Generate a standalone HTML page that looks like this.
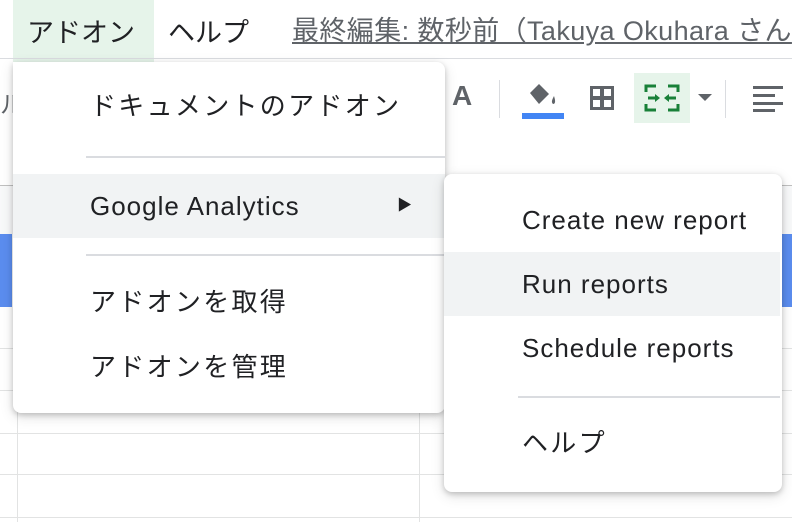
<!DOCTYPE html>
<html><head><meta charset="utf-8"><style>
*{margin:0;padding:0;box-sizing:border-box}
body{width:792px;height:522px;overflow:hidden;background:#fff;position:relative;font-family:"Liberation Sans","Noto Sans CJK JP",sans-serif;color:#202124}
.abs{position:absolute}
.hl{position:absolute;left:0;right:0;height:1px;background:#e2e3e3}
.vl{position:absolute;top:0;bottom:0;width:1px;background:#e2e3e3}
.menu{position:absolute;background:#fff;border-radius:8px;box-shadow:0 2px 6px rgba(0,0,0,.2),0 4px 14px rgba(0,0,0,.12)}
.it{position:absolute;left:0;right:0;font-size:26px;letter-spacing:1px;line-height:64px;height:64px;white-space:nowrap}
.jp{letter-spacing:2.3px}
.sep{position:absolute;height:2px;background:#dadce0}
</style></head><body>
<div class="abs" style="left:13px;top:0;width:141px;height:62px;background:#e6f4ea"></div>
<div class="abs" style="left:27px;top:11px;font-size:27px;color:#202124">アドオン</div>
<div class="abs" style="left:168px;top:11px;font-size:27px;color:#202124">ヘルプ</div>
<div class="abs" style="left:292px;top:9px;font-size:27px;color:#5f6368;text-decoration:underline;white-space:nowrap;letter-spacing:0.4px">最終編集: 数秒前（Takuya Okuhara さん</div>
<div class="hl" style="top:58px;background:#dadce0"></div>
<div class="abs" style="left:0;top:85px;font-size:24px;color:#5f6368">ル</div>
<div class="abs" style="left:452px;top:80px;font-size:28px;font-weight:bold;color:#5f6368">A</div>
<div class="abs" style="left:499px;top:80px;width:1px;height:38px;background:#dadce0"></div>
<svg class="abs" style="left:522px;top:80px" width="44" height="44" viewBox="0 0 44 44"><path d="M8 13 L17 4 L27 14 L17 24 Z" fill="#5f6368"/><path d="M32 16 C30 20 29 22 31 24 C33 24 34 22 32 16Z" fill="#5f6368"/><rect x="0" y="33" width="42" height="6" fill="#4285f4"/></svg>
<svg class="abs" style="left:588px;top:84px" width="28" height="28" viewBox="0 0 28 28"><path d="M2 2h24v24H2z M5 5v7h7V5z M16 5v7h7V5z M5 16v7h7v-7z M16 16v7h7v-7z" fill="#5f6368" fill-rule="evenodd"/></svg>
<div class="abs" style="left:634px;top:73px;width:56px;height:50px;background:#e6f4ea"></div>
<svg class="abs" style="left:644px;top:84px" width="36" height="28" viewBox="0 0 36 28"><g fill="none" stroke="#188038" stroke-width="3"><path d="M2 8V2h10M2 20v6h10M34 8V2H24M34 20v6H24"/><path d="M4 14h9M23 14h9"/></g><path d="M11 10l5 4-5 4zM25 10l-5 4 5 4z" fill="#188038"/></svg>
<div class="abs" style="left:698px;top:94px;width:0;height:0;border-left:7px solid transparent;border-right:7px solid transparent;border-top:7px solid #5f6368"></div>
<div class="abs" style="left:725px;top:80px;width:1px;height:38px;background:#dadce0"></div>
<svg class="abs" style="left:753px;top:86px" width="30" height="26" viewBox="0 0 30 26"><g fill="#5f6368"><rect x="0" y="0" width="30" height="3"/><rect x="0" y="8" width="22" height="3"/><rect x="0" y="16" width="30" height="3"/><rect x="0" y="23" width="22" height="3"/></g></svg>
<div class="abs" style="left:0;top:185px;width:792px;height:49px;background:#f8f9fa"></div>
<div class="hl" style="top:185px;background:#c0c0c0"></div>
<div class="abs" style="left:0;top:234px;width:12px;height:73px;background:#5b8def"></div>
<div class="abs" style="left:782px;top:234px;width:10px;height:73px;background:#5b8def"></div>
<div class="hl" style="top:348px"></div>
<div class="hl" style="top:390px"></div>
<div class="hl" style="top:433px"></div>
<div class="hl" style="top:474px"></div>
<div class="hl" style="top:517px"></div>
<div class="vl" style="left:17px;top:185px"></div>
<div class="vl" style="left:419px;top:185px"></div>
<div class="menu" style="left:13px;top:62px;width:432px;height:351px;border-top-left-radius:0">
  <div class="it jp" style="top:12px;padding-left:77px">ドキュメントのアドオン</div>
  <div class="sep" style="left:73px;right:0;top:94px"></div>
  <div class="it" style="top:112px;padding-left:77px;background:#f1f3f4">Google Analytics<span style="position:absolute;left:384px;font-size:15px">▶</span></div>
  <div class="sep" style="left:73px;right:0;top:192px"></div>
  <div class="it jp" style="top:208px;padding-left:77px">アドオンを取得</div>
  <div class="it jp" style="top:273px;padding-left:77px">アドオンを管理</div>
</div>
<div class="menu" style="left:444px;top:174px;width:338px;height:318px">
  <div class="it" style="top:14px;padding-left:78px">Create new report</div>
  <div class="it" style="top:78px;padding-left:78px;background:#f1f3f4;right:2px">Run reports</div>
  <div class="it" style="top:142px;padding-left:78px">Schedule reports</div>
  <div class="sep" style="left:74px;right:2px;top:222px"></div>
  <div class="it jp" style="top:237px;padding-left:78px">ヘルプ</div>
</div>
</body></html>
